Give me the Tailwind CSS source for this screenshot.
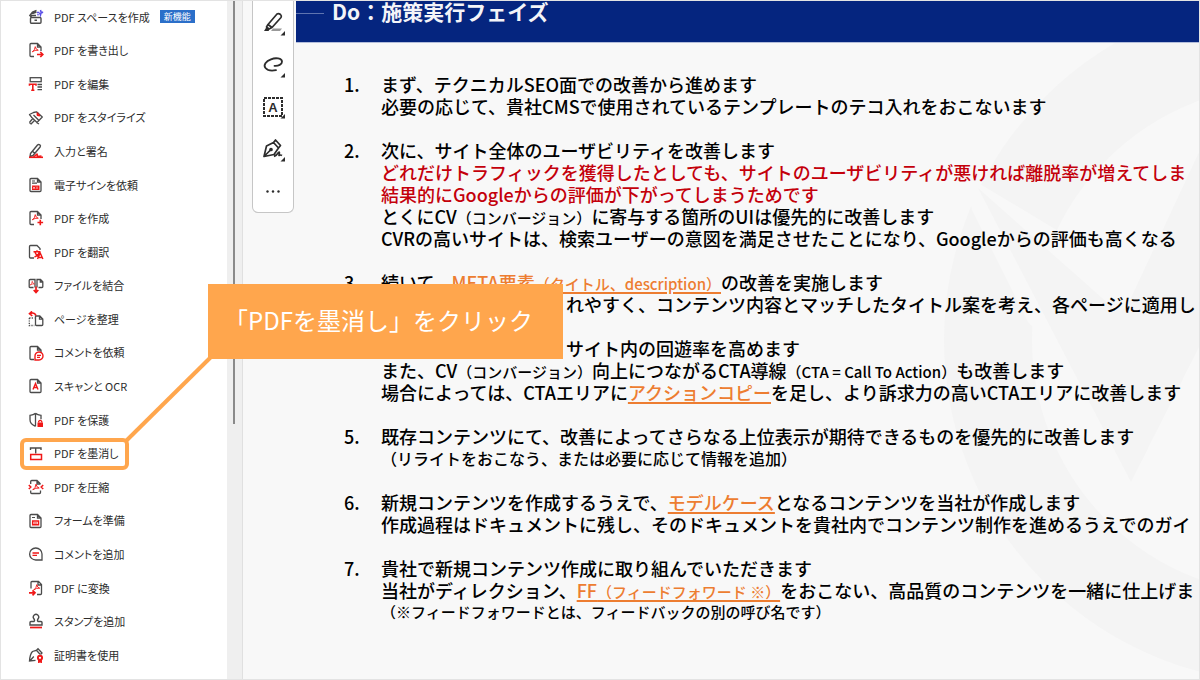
<!DOCTYPE html>
<html lang="ja">
<head>
    <meta charset="UTF-8">
    <meta name="viewport" content="width=device-width, initial-scale=1.0">
    <title>Do：施策実行フェイズ</title>
    <script src="https://cdn.jsdelivr.net/npm/@tailwindcss/browser@4"></script>
</head>
<body class="relative flex h-screen overflow-hidden bg-[#f8f8f8] font-['Noto_Sans_CJK_JP',sans-serif] text-black">

    <!-- shared icon parts -->
    <svg class="hidden">
        <symbol id="doc" viewBox="0 0 16 16"><path d="M2 13.5v-11Q2 1.5 3 1.5h6.5l3.5 3.5v8.5q0 1-1 1H3q-1 0-1-1zM9.500 1.500v3.500h3.500" fill="none" stroke="#4b4b4b" stroke-width="1.3"/></symbol>
        <symbol id="doc-open" viewBox="0 0 16 16"><path d="M6 14.500H3q-1 0-1-1v-11Q2 1.500 3 1.500h6.500l3.500 3.500v4M9.500 1.500v3.500h3.500" fill="none" stroke="#4b4b4b" stroke-width="1.3"/></symbol>
        <symbol id="acrobat" viewBox="0 0 10 10"><path d="M1 8.500Q4.500 6.500 5 1.500 5.500 5.500 9 6.300 4.500 5.700 1 8.500z" fill="none" stroke="#f01818" stroke-width="1.200" stroke-linejoin="round"/></symbol>
    </svg>

    <nav class="flex w-[227px] shrink-0 flex-col bg-white pb-2 text-[11px] text-[#2c2c2c] [font-feature-settings:'palt']">
        <a href="#" class="flex flex-1 items-center gap-2.5 pl-7">
            <svg class="size-4" viewBox="0 0 16 16" fill="none" stroke="#4b4b4b" stroke-width="1.4"><rect x="2.500" y="8.500" width="10.500" height="5.800" rx="1"/><path d="M3.500 8.300 1.800 6.500 4.500 3 8.500 1.300M3 6.500h5M4.500 4.500l4-1.500M6.500 11.200h2.500"/><path d="M9 3.500h2.500M12.500 1l.5 2 2 .3-2 .7-.5 2-.8-2M9.500 6.200l1-1" stroke="#5b50e8" stroke-width="1.500"/></svg>
            PDF スペースを作成
            <span class="bg-[#2b6fc9] px-1 text-[9px] leading-[13px] text-white">新機能</span>
        </a>
        <a href="#" class="flex flex-1 items-center gap-2.5 pl-7">
            <svg class="size-4" viewBox="0 0 16 16"><use href="#doc-open"/><use href="#acrobat" x="3.500" y="3.500" width="7.500" height="7.500"/><path d="M9 12.500h5M12.300 10l2.500 2.500-2.500 2.500" fill="none" stroke="#f01818" stroke-width="1.700"/></svg>
            PDF を書き出し
        </a>
        <a href="#" class="flex flex-1 items-center gap-2.5 pl-7">
            <svg class="size-4" viewBox="0 0 16 16" fill="none" stroke="#4b4b4b" stroke-width="1.300"><rect x="2.200" y="1.700" width="11" height="4"/><path d="M9.500 8.500H14M9.500 11H14M9.500 13.700H14"/><path d="M1.500 9.800V8.200h6.500v1.600M4.800 8.200v6M3.200 14.300h3.200" stroke="#f01818" stroke-width="1.600"/></svg>
            PDF を編集
        </a>
        <a href="#" class="flex flex-1 items-center gap-2.5 pl-7">
            <svg class="size-4" viewBox="0 0 16 16" fill="none" stroke="#4b4b4b" stroke-width="1.300" stroke-linejoin="round"><path d="M1.500 4.500 5.500 2.500 8.500 1.800 14.300 7 9 12.500 3.500 7.200zM1.500 4.500l2 2.700M4.800 8.500 1.800 12q-.3 1.500 1.200 2L6.500 10.500M8.500 12.500l2.500 1.500M5.500 5l5.500 5.500"/><path d="M9.500 2.500v2.500l2.500.5" stroke="#f01818" stroke-width="1.800"/></svg>
            PDF をスタイライズ
        </a>
        <a href="#" class="flex flex-1 items-center gap-2.5 pl-7">
            <svg class="size-4" viewBox="0 0 16 16" fill="none" stroke="#4b4b4b" stroke-width="1.400" stroke-linejoin="round"><path d="M2.500 10.500 9.500 2q1-1 2.300-.2 1.200 1 .3 2.200L5 12.500 2 13.500zM4.500 8.300l2.200 2"/><path d="M1 14.300h14" stroke="#f01818" stroke-width="1.600"/><path d="M5.500 14 9 11l.5 2.500 4-.5" stroke="#f01818" stroke-width="1.600"/></svg>
            入力と署名
        </a>
        <a href="#" class="flex flex-1 items-center gap-2.5 pl-7">
            <svg class="size-4" viewBox="0 0 16 16"><use href="#doc"/><path d="M4 4h3M4 6.200h5" stroke="#4b4b4b" stroke-width="1.200"/><path d="M4 8.500h7.500v4.500H4z" fill="#f01818"/><path d="M5 9.800l2 2m0-2-2 2M9 9.500v2.500" stroke="#fff" stroke-width=".7"/></svg>
            電子サインを依頼
        </a>
        <a href="#" class="flex flex-1 items-center gap-2.5 pl-7">
            <svg class="size-4" viewBox="0 0 16 16"><use href="#doc-open"/><use href="#acrobat" x="3.500" y="3.500" width="7.500" height="7.500"/><path d="M12.300 9.700v5.600M9.500 12.500h5.600" stroke="#f01818" stroke-width="1.600"/></svg>
            PDF を作成
        </a>
        <a href="#" class="flex flex-1 items-center gap-2.5 pl-7">
            <svg class="size-4" viewBox="0 0 16 16" fill="none"><path d="M6 14H2.500Q1.500 14 1.500 13V2.500q0-1 1-1H9L12 4.500V6" stroke="#4b4b4b" stroke-width="1.300"/><path d="M5.500 7.800h7M9 6.300v1.500M7 8q1 3.500 4 5M11.500 8q-1 3.500-5 5M9.500 15l2.700-6 2.700 6M10.500 13.500h3.500" stroke="#f01818" stroke-width="1.400"/></svg>
            PDF を翻訳
        </a>
        <a href="#" class="flex flex-1 items-center gap-2.5 pl-7">
            <svg class="size-4" viewBox="0 0 16 16" fill="none" stroke="#4b4b4b" stroke-width="1.300"><path d="M5.500 9.500H2Q1.200 9.500 1.200 8.500V2.500q0-1 1-1H7v8M9 9.500V1.500h3.500l2.300 2.300v5q0 .7-.8.7h-3.500M12.300 1.500V4h2.500"/><use href="#acrobat" x="1.500" y="2.500" width="5.500" height="5.500"/><path d="M8 8.500v6M5.700 12 8 14.500l2.300-2.500" stroke="#f01818" stroke-width="1.700"/></svg>
            ファイルを結合
        </a>
        <a href="#" class="flex flex-1 items-center gap-2.5 pl-7">
            <svg class="size-4" viewBox="0 0 16 16" fill="none" stroke="#4b4b4b" stroke-width="1.300"><path d="M7.500 5h4.300l3 3v5.500q0 1-1 1H8.500q-1 0-1-1zM11.500 5v3.200h3.200"/><path d="M1.300 7v7.500h5M1.300 7h5" stroke-dasharray="1.200 1.200"/><path d="M8 4.500Q6.500 1 2 2.500M4 .3 1.500 2.700 4.300 4.800" stroke="#f01818" stroke-width="1.600"/></svg>
            ページを整理
        </a>
        <a href="#" class="flex flex-1 items-center gap-2.5 pl-7">
            <svg class="size-4" viewBox="0 0 16 16"><use href="#doc-open"/><path d="M7 15v-3.800a4 4 0 1 1 4 3.800z" fill="#fff" stroke="#f01818" stroke-width="1.400"/><path d="M9 10.300h4M9 12.300h3" stroke="#f01818" stroke-width="1.200"/></svg>
            コメントを依頼
        </a>
        <a href="#" class="flex flex-1 items-center gap-2.5 pl-7">
            <svg class="size-4" viewBox="0 0 16 16"><use href="#doc"/><path d="M5 11.500 7.500 5.500 10 11.500M6 9.500h3" fill="none" stroke="#f01818" stroke-width="1.400"/></svg>
            スキャンと OCR
        </a>
        <a href="#" class="flex flex-1 items-center gap-2.5 pl-7">
            <svg class="size-4" viewBox="0 0 16 16" fill="none" stroke="#4b4b4b" stroke-width="1.300"><path d="M7.500 1.300v13M7.500 1.300Q5.500 3 2 3.300v4.500q0 4.500 5.500 6.500M7.500 1.300q2 1.700 5.500 2v4"/><rect x="9.500" y="10.500" width="5.500" height="4.500" fill="#f01818" stroke="none"/><path d="M10.700 10.500V9.300q1.500-2 3 0v1.200" stroke="#f01818"/></svg>
            PDF を保護
        </a>
        <a href="#" class="relative flex flex-1 items-center gap-2.5 pl-7">
            <svg class="size-4" viewBox="0 0 16 16" fill="none" stroke="#4b4b4b" stroke-width="1.400"><path d="M2.500 4V2h10.500v2M7.700 2v5.500"/><rect x="2.700" y="8.500" width="10.800" height="5" stroke="#f01818" stroke-width="1.500"/></svg>
            PDF を墨消し
            <span class="absolute left-5 h-8 w-[109px] rounded-md border-4 border-[#ffa64d]"></span>
        </a>
        <a href="#" class="flex flex-1 items-center gap-2.5 pl-7">
            <svg class="size-4" viewBox="0 0 16 16" fill="none" stroke="#4b4b4b" stroke-width="1.300"><path d="M2.700 5V2.500q0-1 1-1H9l3.500 3.500M9 1.500V5h3.500M2.700 11.500v2q0 1 1 1h7.800q1 0 1-1v-2"/><path d="M.8 6l2 2-2 2M15.200 6l-2 2 2 2" stroke="#f01818" stroke-width="1.500"/><use href="#acrobat" x="4" y="4" width="8" height="8"/></svg>
            PDF を圧縮
        </a>
        <a href="#" class="flex flex-1 items-center gap-2.5 pl-7">
            <svg class="size-4" viewBox="0 0 16 16"><use href="#doc"/><path d="M4 4.500h3" stroke="#4b4b4b"/><path d="M4.700 8h5.800v3.800H4.700z" fill="none" stroke="#f01818" stroke-width="1.500"/><path d="M6 10h3" stroke="#f01818"/></svg>
            フォームを準備
        </a>
        <a href="#" class="flex flex-1 items-center gap-2.5 pl-7">
            <svg class="size-4" viewBox="0 0 16 16" fill="none" stroke="#4b4b4b" stroke-width="1.300"><path d="M14 8v6H8A6.200 6 0 1 1 14 8z"/><path d="M4.500 7h6.500M4.500 9.300h4.500" stroke="#f01818"/></svg>
            コメントを追加
        </a>
        <a href="#" class="flex flex-1 items-center gap-2.5 pl-7">
            <svg class="size-4" viewBox="0 0 16 16" fill="none"><path d="M3 8.500v-6q0-1 1-1h6.500l3 3V13.500q0 1-1 1H9M10 1.500v3.500h3.500" stroke="#4b4b4b" stroke-width="1.300"/><use href="#acrobat" x="5" y="3.500" width="7.500" height="7.500"/><path d="M1 12.800h5.500M4.500 10.300 7 12.800l-2.500 2.500" stroke="#f01818" stroke-width="1.700"/></svg>
            PDF に変換
        </a>
        <a href="#" class="flex flex-1 items-center gap-2.5 pl-7">
            <svg class="size-4" viewBox="0 0 16 16" fill="none" stroke="#4b4b4b" stroke-width="1.400"><path d="M2 12V9.500q0-1 1-1h3q1.200-1-.3-3a2.700 2.700 0 1 1 4.600 0q-1.500 2-.3 3h3q1 0 1 1V12z"/><path d="M2 14.500h12" stroke="#f01818" stroke-width="1.700"/></svg>
            スタンプを追加
        </a>
        <a href="#" class="flex flex-1 items-center gap-2.5 pl-7">
            <svg class="size-4" viewBox="0 0 16 16" fill="none" stroke="#4b4b4b" stroke-width="1.300"><path d="M7.500 13.300 1.500 14Q2 7 4.500 4.500l4-1.200 3.500 4M2 13.700l3.800-4.200M8.500 3.300l1.500-1.500 4 4.200-1.500 1.500"/><circle cx="12" cy="10.800" r="2.100" stroke="#f01818" stroke-width="1.900"/><path d="M10.700 13v2.500l1.300-1 1.300 1V13" fill="#f01818" stroke="#f01818"/></svg>
            証明書を使用
        </a>
    </nav>

    <!-- scroll track -->
    <div class="w-4 shrink-0 border-r border-[#e0e0e0] bg-[#efefef] pl-1.5">
        <div class="h-[424px] w-0.5 bg-[#8a8a8a]"></div>
    </div>

    <main class="relative flex min-w-0 flex-1 items-start gap-0.5 overflow-hidden pl-[9px]">
        <div class="z-10 flex w-[42px] shrink-0 flex-col rounded-b-md border border-t-0 border-[#c6c6c6] bg-white pt-0.5 text-[#2c2c2c]">
            <button aria-label="ハイライト" class="flex h-[42px] items-center justify-center">
                <svg class="size-7" viewBox="0 0 28 28" fill="none" stroke="#2c2c2c" stroke-width="1.700" stroke-linejoin="round"><path d="M14 19.500h9l-2 2.500h-9z" fill="#999" stroke="none"/><path d="M9 15.500 18 5q1.500-1 3.500.5 1.500 1.500.5 3L13 18.500zM9 15.500l-1.500 2.500 2.500 2 3-1.500z"/><path d="M5 22l2.500-4 3 2.500-1 1.500zM26 22v4.500h-4.500z" fill="#2c2c2c" stroke="none"/></svg>
            </button>
            <button aria-label="描画" class="flex h-[42px] items-center justify-center">
                <svg class="size-7" viewBox="0 0 28 28" fill="none" stroke="#2c2c2c" stroke-width="1.800" stroke-linecap="round"><path d="M15.500 14.800c4 .3 7.500-1.500 7.500-4.100C23 7 16.500 6.500 12 8.300 7 10.200 4 14 6.500 17c2 2.500 6.500 3 10.500 2.200"/><path d="M26 22v4.500h-4.500z" fill="#2c2c2c" stroke="none"/></svg>
            </button>
            <button aria-label="テキストを選択" class="flex h-[42px] items-center justify-center">
                <svg class="size-7" viewBox="0 0 28 28"><rect x="5" y="5" width="18" height="18" fill="none" stroke="#2c2c2c" stroke-width="2" stroke-dasharray="3 1"/><text x="14" y="18.500" text-anchor="middle" font-family="Liberation Sans" font-weight="bold" font-size="13" fill="#2c2c2c">A</text><path d="M26 21v4.500h-4.500z" fill="#2c2c2c"/></svg>
            </button>
            <button aria-label="署名" class="flex h-[42px] items-center justify-center">
                <svg class="size-7" viewBox="0 0 28 28" fill="none" stroke="#2c2c2c" stroke-width="1.700" stroke-linejoin="round"><path d="M5 21.500 7.500 11 14.500 7.500l5 5.500-4.500 6.500zM5 21.500l7-7M14.500 7.500l2-2.500 5 5.500-2 2.500M15 21.500q2.500-1 4.500-4 1.500-1.500.5 3 1.500-1 3 0"/><circle cx="12" cy="14.500" r="1" fill="#2c2c2c"/><path d="M26 22v4.500h-4.500z" fill="#2c2c2c" stroke="none"/></svg>
            </button>
            <button aria-label="その他" class="flex h-[42px] items-center justify-center">
                <svg class="size-7" viewBox="0 0 28 28" fill="#2c2c2c"><circle cx="8.500" cy="14.500" r="1.200"/><circle cx="14" cy="14.500" r="1.200"/><circle cx="19.500" cy="14.500" r="1.200"/></svg>
            </button>
        </div>

        <article class="relative min-w-0 flex-1 self-stretch overflow-hidden">
            <!-- faint logo behind the slide -->
            <svg class="absolute top-0 right-0 h-[680px] w-[280px]" viewBox="920 0 280 680">
                <circle cx="1287" cy="340" r="299" fill="none" stroke="#f4f4f4" stroke-width="88"/>
                <path d="M965 175 1060 232 1050 345 1028 322 972 210z" fill="#f8f8f8"/>
                <path d="M978 188 1110 305Q1122 318 1130 300L1200 150V345L1131 482z" fill="#f4f4f4"/>
            </svg>

            <header class="relative flex h-[43px] items-start border-b border-[#b4bedb] bg-[#05257f]">
                <span class="mt-[13px] h-px w-7 bg-[#5f74b0]"></span>
                <h1 class="ml-2 text-[21px] leading-[22px] font-bold text-[#f4f4f8]">Do：施策実行フェイズ</h1>
            </header>

            <ol class="relative flex flex-col gap-[22px] pt-[30px] pl-12 text-lg leading-[22px] font-medium whitespace-nowrap">
                <li class="flex">
                    <span class="w-[37px] shrink-0">1.</span>
                    <div>
                        <p>まず、テクニカルSEO面での改善から進めます</p>
                        <p>必要の応じて、貴社CMSで使用されているテンプレートのテコ入れをおこないます</p>
                    </div>
                </li>
                <li class="flex">
                    <span class="w-[37px] shrink-0">2.</span>
                    <div>
                        <p>次に、サイト全体のユーザビリティを改善します</p>
                        <p class="text-[#c4000b]">どれだけトラフィックを獲得したとしても、サイトのユーザビリティが悪ければ離脱率が増えてしま</p>
                        <p class="text-[#c4000b]">結果的にGoogleからの評価が下がってしまうためです</p>
                        <p>とくにCV<span class="text-[15px] leading-none">（コンバージョン）</span>に寄与する箇所のUIは優先的に改善します</p>
                        <p>CVRの高いサイトは、検索ユーザーの意図を満足させたことになり、Googleからの評価も高くなる</p>
                    </div>
                </li>
                <li class="flex">
                    <span class="w-[37px] shrink-0">3.</span>
                    <div>
                        <p>続いて、<a href="#" class="text-[#ed7d31] underline decoration-2 underline-offset-2">META要素<span class="text-[15px] leading-none">（タイトル、description）</span></a>の改善を実施します</p>
                        <p class="flex"><span class="w-[185px]">検索エンジンに評価さ</span>れやすく、コンテンツ内容とマッチしたタイトル案を考え、各ページに適用し</p>
                    </div>
                </li>
                <li class="flex">
                    <span class="w-[37px] shrink-0">4.</span>
                    <div>
                        <p class="flex"><span class="w-[185px]">内部リンクを整えて、</span>サイト内の回遊率を高めます</p>
                        <p>また、CV<span class="text-[15px] leading-none">（コンバージョン）</span>向上につながるCTA導線<span class="text-[15px] leading-none">（CTA = Call To Action）</span>も改善します</p>
                        <p>場合によっては、CTAエリアに<a href="#" class="text-[#ed7d31] underline decoration-2 underline-offset-2">アクションコピー</a>を足し、より訴求力の高いCTAエリアに改善します</p>
                    </div>
                </li>
                <li class="flex">
                    <span class="w-[37px] shrink-0">5.</span>
                    <div>
                        <p>既存コンテンツにて、改善によってさらなる上位表示が期待できるものを優先的に改善します</p>
                        <p class="text-base leading-[22px]">（リライトをおこなう、または必要に応じて情報を追加）</p>
                    </div>
                </li>
                <li class="flex">
                    <span class="w-[37px] shrink-0">6.</span>
                    <div>
                        <p>新規コンテンツを作成するうえで、<a href="#" class="text-[#ed7d31] underline decoration-2 underline-offset-2">モデルケース</a>となるコンテンツを当社が作成します</p>
                        <p>作成過程はドキュメントに残し、そのドキュメントを貴社内でコンテンツ制作を進めるうえでのガイ</p>
                    </div>
                </li>
                <li class="flex">
                    <span class="w-[37px] shrink-0">7.</span>
                    <div>
                        <p>貴社で新規コンテンツ作成に取り組んでいただきます</p>
                        <p>当社がディレクション、<a href="#" class="text-[#ed7d31] underline decoration-2 underline-offset-2">FF<span class="text-[15px] leading-none">（フィードフォワード ※）</span></a>をおこない、高品質のコンテンツを一緒に仕上げま</p>
                        <p class="text-[15px] leading-[22px]">（※フィードフォワードとは、フィードバックの別の呼び名です）</p>
                    </div>
                </li>
            </ol>
        </article>
    </main>

    <!-- callout and its leader line -->
    <svg class="pointer-events-none absolute top-[350px] left-[120px] z-20 h-[100px] w-[100px]" viewBox="0 0 100 100"><path d="M6 91 92 6" stroke="#ffa64d" stroke-width="4"/></svg>
    <div class="absolute top-[284px] left-[208px] z-20 w-[355px] bg-[#ffa64d] pt-[18px] pb-[22px] pl-4 text-2xl leading-[35px] whitespace-nowrap text-white">「PDFを墨消し」をクリック</div>

    <div class="pointer-events-none absolute inset-0 z-30 border border-[#e3e3e3]"></div>

</body>
</html>
